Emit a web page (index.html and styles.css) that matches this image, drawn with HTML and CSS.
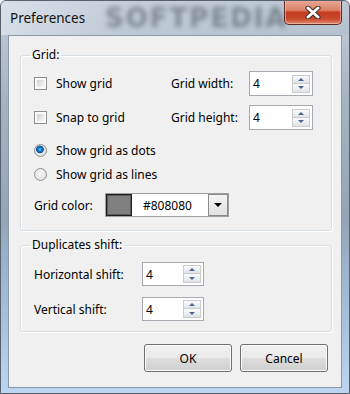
FILE: index.html
```html
<!DOCTYPE html>
<html>
<head>
    <title>Preferences</title>
    <link rel="stylesheet" href="styles.css">
</head>
<body>
    <div class="window">
        <div class="titlebar">
            <span class="title">Preferences</span>
            <span class="title-mark">SOFTPEDIA</span>
            <button type="button" class="close" title="Close">
                <svg width="16" height="13" viewBox="0 0 16 13">
                    <path d="M3 2 L13 11 M13 2 L3 11" stroke="#3a2a2a" stroke-width="5" stroke-linecap="round"/>
                    <path d="M3 2 L13 11 M13 2 L3 11" stroke="#ffffff" stroke-width="3" stroke-linecap="round"/>
                </svg>
            </button>
        </div>

        <div class="client">
            <fieldset class="group grid-group">
                <legend>Grid:</legend>

                <div class="row row-first">
                    <label class="check col-left"><span class="box"></span>Show grid</label>
                    <span class="field-label">Grid width:</span>
                    <div class="spin">
                        <span class="value">4</span>
                        <span class="arrows"><span class="up"></span><span class="down"></span></span>
                    </div>
                </div>

                <div class="row row-second">
                    <label class="check col-left"><span class="box"></span>Snap to grid</label>
                    <span class="field-label">Grid height:</span>
                    <div class="spin">
                        <span class="value">4</span>
                        <span class="arrows"><span class="up"></span><span class="down"></span></span>
                    </div>
                </div>

                <div class="row row-radio">
                    <label class="check"><span class="radio checked"></span>Show grid as dots</label>
                </div>
                <div class="row row-radio2">
                    <label class="check"><span class="radio"></span>Show grid as lines</label>
                </div>

                <div class="row row-color">
                    <span class="color-label">Grid color:</span>
                    <div class="combo">
                        <span class="swatch"></span>
                        <span class="combo-text">#808080</span>
                        <span class="drop"></span>
                    </div>
                </div>
            </fieldset>

            <fieldset class="group dup-group">
                <legend>Duplicates shift:</legend>

                <div class="row shift-row">
                    <span class="shift-label">Horizontal shift:</span>
                    <div class="spin spin-small">
                        <span class="value">4</span>
                        <span class="arrows"><span class="up"></span><span class="down"></span></span>
                    </div>
                </div>
                <div class="row shift-row shift-second">
                    <span class="shift-label">Vertical shift:</span>
                    <div class="spin spin-small">
                        <span class="value">4</span>
                        <span class="arrows"><span class="up"></span><span class="down"></span></span>
                    </div>
                </div>
            </fieldset>

            <div class="buttons">
                <button type="button" class="btn">OK</button>
                <button type="button" class="btn">Cancel</button>
            </div>
        </div>
    </div>
</body>
</html>
```

FILE: styles.css
```css
body {
    margin: 0;
    font-family: "Noto Sans", "Open Sans", sans-serif;
    font-size: 12px;
    color: #000;
}

/* Fenetre */
.window {
    width: 350px;
    height: 394px;
    box-sizing: border-box;
    display: flex;
    flex-direction: column;
    border: 1px solid #56616c;
    border-radius: 6px 6px 0 0;
    background: linear-gradient(180deg, #c3ced9 0%, #a6b4c2 25%, #93a5b7 55%, #a6c0db 80%, #bcd5f0 100%);
    overflow: hidden;
}

.titlebar {
    height: 34px;
    display: flex;
    align-items: center;
    padding-left: 9px;
    position: relative;
    background: linear-gradient(90deg, rgba(225, 232, 239, 0.7) 0%, rgba(200, 210, 220, 0.3) 35%, rgba(150, 165, 180, 0.15) 100%);
}

.title {
    font-size: 13.5px;
    color: #111;
    position: relative;
    z-index: 1;
}

.title-mark {
    position: absolute;
    left: 104px;
    top: 2px;
    font-family: "DejaVu Sans", sans-serif;
    font-weight: bold;
    font-size: 26px;
    line-height: 30px;
    letter-spacing: 2px;
    color: transparent;
    text-shadow: 0 0 5px rgba(60, 70, 80, 0.5);
}

.close {
    margin-left: auto;
    margin-right: 7px;
    align-self: flex-start;
    margin-top: -1px;
    width: 58px;
    height: 25px;
    padding: 0;
    border: 1px solid #5b2a24;
    border-top: none;
    border-radius: 0 0 5px 5px;
    background: linear-gradient(180deg, #e9aa98 0%, #dc8068 42%, #c53c20 52%, #c9472b 78%, #e08a6c 100%);
    box-shadow: inset 0 0 0 1px rgba(255, 220, 210, 0.5);
    display: flex;
    align-items: center;
    justify-content: center;
    position: relative;
    z-index: 1;
}

.client {
    flex: 1;
    margin: 0 7px 5px;
    border: 1px solid #8898a9;
    background-color: #f0f0f0;
    padding: 11px 9px 0 11px;
    display: flex;
    flex-direction: column;
}

/* Groupes */
.group {
    margin: 0;
    min-width: 0;
    border: 1px solid #d5dfe5;
    border-radius: 3px;
    box-shadow: inset 1px 1px 0 #fff, 1px 1px 0 #fff;
}

.group legend {
    padding: 0 2px;
    margin-left: -4px;
    line-height: 16px;
}

.grid-group {
    padding: 8px 12px 13px 13px;
}

.dup-group {
    margin-top: 6px;
    padding: 9px 12px 10px 13px;
}

.row {
    display: flex;
    align-items: center;
}

.row-first, .row-second {
    height: 25px;
}

.row-second {
    margin-top: 9px;
}

.row-radio {
    margin-top: 9px;
    height: 22px;
}

.row-radio2 {
    margin-top: 2px;
    height: 22px;
}

.row-color {
    margin-top: 8px;
    height: 24px;
}

.col-left {
    width: 137px;
}

.field-label {
    width: 78px;
}

.color-label {
    width: 71px;
}

.check {
    display: flex;
    align-items: center;
}

.box, .radio {
    width: 13px;
    height: 13px;
    box-sizing: border-box;
    margin-right: 9px;
    flex: none;
}

.box {
    border: 1px solid #8e8f8f;
    padding: 2px;
    background: linear-gradient(135deg, #cbcfd5, #f7f7f7) content-box, #f9f9f9;
}

.radio {
    border: 1px solid #8e8f8f;
    border-radius: 50%;
    background: radial-gradient(circle at 40% 35%, #f8f8f8 0, #d7d9dc 100%);
}

.radio.checked {
    background:
        radial-gradient(circle at 45% 40%, #7fd0ff 0, #1c83d4 1.5px, #0e4f93 3.5px, rgba(14, 79, 147, 0) 4.2px),
        radial-gradient(circle at 40% 35%, #f8f8f8 0, #d7d9dc 100%);
}

/* Champs numeriques */
.spin {
    width: 64px;
    height: 25px;
    box-sizing: border-box;
    border: 1px solid #a5a9b0;
    background-color: #fff;
    display: flex;
    align-items: center;
    padding-left: 3px;
}

.spin-small {
    width: 62px;
    height: 24px;
}

.spin .value {
    flex: 1;
}

.arrows {
    width: 18px;
    margin-right: 2px;
    display: flex;
    flex-direction: column;
}

.up, .down {
    height: 9px;
    box-sizing: border-box;
    border: 1px solid #c9cbcf;
    background: linear-gradient(180deg, #fbfbfb, #e1e3e6);
    display: flex;
    align-items: center;
    justify-content: center;
}

.down {
    border-top: none;
}

.up::before {
    content: "";
    border-left: 3px solid transparent;
    border-right: 3px solid transparent;
    border-bottom: 3px solid #4a6392;
}

.down::before {
    content: "";
    border-left: 3px solid transparent;
    border-right: 3px solid transparent;
    border-top: 3px solid #4a6392;
}

/* Choix de couleur */
.combo {
    width: 124px;
    height: 24px;
    box-sizing: border-box;
    border: 1px solid #a0a0a0;
    background-color: #fff;
    display: flex;
    align-items: center;
}

.swatch {
    width: 26px;
    height: 22px;
    box-sizing: border-box;
    border: 1px solid #1e1e1e;
    box-shadow: inset 0 0 0 1px #5a5a5a;
    background-color: #808080;
}

.combo-text {
    margin-left: 11px;
}

.drop {
    margin-left: auto;
    width: 20px;
    height: 22px;
    box-sizing: border-box;
    border: 1px solid #8a8a8a;
    background: linear-gradient(180deg, #f4f4f4, #e2e2e2);
    display: flex;
    align-items: center;
    justify-content: center;
}

.drop::before {
    content: "";
    border-left: 4px solid transparent;
    border-right: 4px solid transparent;
    border-top: 4px solid #000;
}

/* Decalage */
.shift-row {
    height: 24px;
}

.shift-second {
    margin-top: 11px;
}

.shift-label {
    width: 108px;
}

/* Boutons */
.buttons {
    margin-top: 12px;
    padding-right: 4px;
    display: flex;
    justify-content: flex-end;
    gap: 8px;
}

.btn {
    width: 88px;
    height: 28px;
    border: 1px solid #707070;
    border-radius: 3px;
    background: linear-gradient(180deg, #f2f2f2 0%, #ebebeb 48%, #dddddd 52%, #cfcfcf 100%);
    box-shadow: inset 0 0 0 1px #fbfbfb;
    font-family: inherit;
    font-size: 12px;
    color: #000;
    padding: 0;
}
```
